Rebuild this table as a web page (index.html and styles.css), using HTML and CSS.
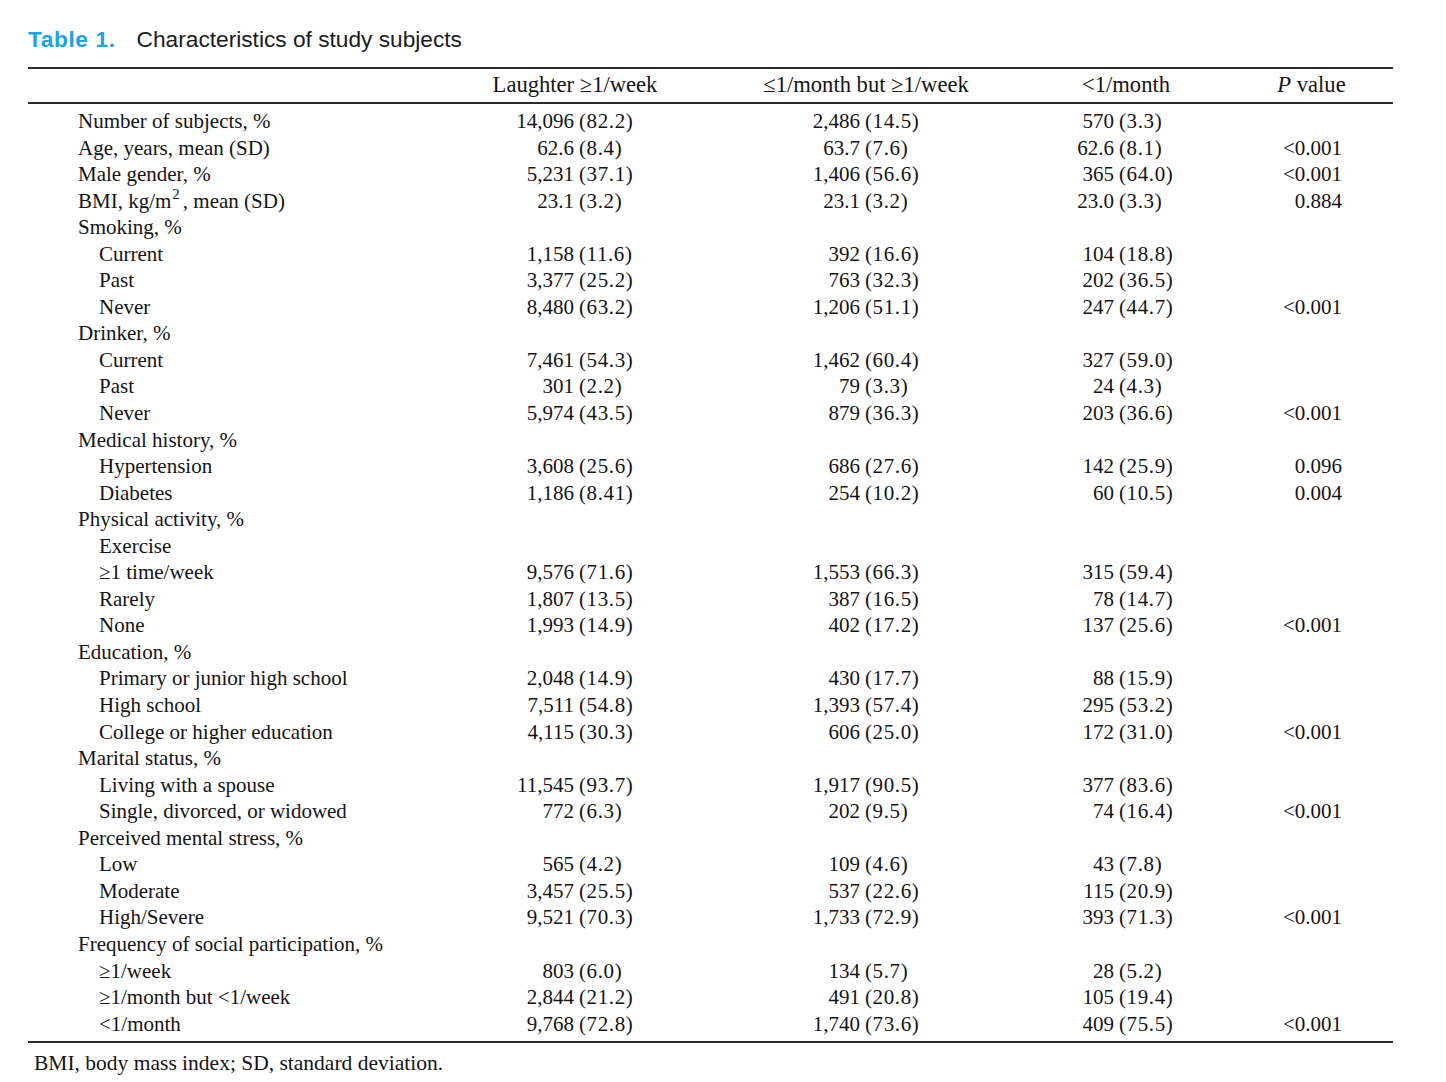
FILE: index.html
```html
<!DOCTYPE html>
<html lang="en">
<head>
<meta charset="utf-8">
<title>Table 1. Characteristics of study subjects</title>
<link rel="stylesheet" href="styles.css">
</head>
<body>
<div class="page">
  <h1 class="title"><span class="tlabel">Table 1.</span><span class="ttext">Characteristics of study subjects</span></h1>
  <div class="table">
    <div class="row head">
      <div class="lab"></div>
      <div class="h">Laughter ≥1/week</div>
      <div class="h">≤1/month but ≥1/week</div>
      <div class="h">&lt;1/month</div>
      <div class="h"><i>P</i> value</div>
    </div>
    <div class="body">
      <div class="row"><div class="lab">Number of subjects, %</div><div class="v c1"><span>14,096</span><span>(82.2)</span></div><div class="v c2"><span>2,486</span><span>(14.5)</span></div><div class="v c3"><span>570</span><span>(3.3)</span></div><div class="p"></div></div>
      <div class="row"><div class="lab">Age, years, mean (SD)</div><div class="v c1"><span>62.6</span><span>(8.4)</span></div><div class="v c2"><span>63.7</span><span>(7.6)</span></div><div class="v c3"><span>62.6</span><span>(8.1)</span></div><div class="p">&lt;0.001</div></div>
      <div class="row"><div class="lab">Male gender, %</div><div class="v c1"><span>5,231</span><span>(37.1)</span></div><div class="v c2"><span>1,406</span><span>(56.6)</span></div><div class="v c3"><span>365</span><span>(64.0)</span></div><div class="p">&lt;0.001</div></div>
      <div class="row"><div class="lab">BMI, kg/m<sup>2</sup>, mean (SD)</div><div class="v c1"><span>23.1</span><span>(3.2)</span></div><div class="v c2"><span>23.1</span><span>(3.2)</span></div><div class="v c3"><span>23.0</span><span>(3.3)</span></div><div class="p">0.884</div></div>
      <div class="row"><div class="lab">Smoking, %</div></div>
      <div class="row"><div class="lab sub">Current</div><div class="v c1"><span>1,158</span><span>(11.6)</span></div><div class="v c2"><span>392</span><span>(16.6)</span></div><div class="v c3"><span>104</span><span>(18.8)</span></div><div class="p"></div></div>
      <div class="row"><div class="lab sub">Past</div><div class="v c1"><span>3,377</span><span>(25.2)</span></div><div class="v c2"><span>763</span><span>(32.3)</span></div><div class="v c3"><span>202</span><span>(36.5)</span></div><div class="p"></div></div>
      <div class="row"><div class="lab sub">Never</div><div class="v c1"><span>8,480</span><span>(63.2)</span></div><div class="v c2"><span>1,206</span><span>(51.1)</span></div><div class="v c3"><span>247</span><span>(44.7)</span></div><div class="p">&lt;0.001</div></div>
      <div class="row"><div class="lab">Drinker, %</div></div>
      <div class="row"><div class="lab sub">Current</div><div class="v c1"><span>7,461</span><span>(54.3)</span></div><div class="v c2"><span>1,462</span><span>(60.4)</span></div><div class="v c3"><span>327</span><span>(59.0)</span></div><div class="p"></div></div>
      <div class="row"><div class="lab sub">Past</div><div class="v c1"><span>301</span><span>(2.2)</span></div><div class="v c2"><span>79</span><span>(3.3)</span></div><div class="v c3"><span>24</span><span>(4.3)</span></div><div class="p"></div></div>
      <div class="row"><div class="lab sub">Never</div><div class="v c1"><span>5,974</span><span>(43.5)</span></div><div class="v c2"><span>879</span><span>(36.3)</span></div><div class="v c3"><span>203</span><span>(36.6)</span></div><div class="p">&lt;0.001</div></div>
      <div class="row"><div class="lab">Medical history, %</div></div>
      <div class="row"><div class="lab sub">Hypertension</div><div class="v c1"><span>3,608</span><span>(25.6)</span></div><div class="v c2"><span>686</span><span>(27.6)</span></div><div class="v c3"><span>142</span><span>(25.9)</span></div><div class="p">0.096</div></div>
      <div class="row"><div class="lab sub">Diabetes</div><div class="v c1"><span>1,186</span><span>(8.41)</span></div><div class="v c2"><span>254</span><span>(10.2)</span></div><div class="v c3"><span>60</span><span>(10.5)</span></div><div class="p">0.004</div></div>
      <div class="row"><div class="lab">Physical activity, %</div></div>
      <div class="row"><div class="lab sub">Exercise</div></div>
      <div class="row"><div class="lab sub">≥1 time/week</div><div class="v c1"><span>9,576</span><span>(71.6)</span></div><div class="v c2"><span>1,553</span><span>(66.3)</span></div><div class="v c3"><span>315</span><span>(59.4)</span></div><div class="p"></div></div>
      <div class="row"><div class="lab sub">Rarely</div><div class="v c1"><span>1,807</span><span>(13.5)</span></div><div class="v c2"><span>387</span><span>(16.5)</span></div><div class="v c3"><span>78</span><span>(14.7)</span></div><div class="p"></div></div>
      <div class="row"><div class="lab sub">None</div><div class="v c1"><span>1,993</span><span>(14.9)</span></div><div class="v c2"><span>402</span><span>(17.2)</span></div><div class="v c3"><span>137</span><span>(25.6)</span></div><div class="p">&lt;0.001</div></div>
      <div class="row"><div class="lab">Education, %</div></div>
      <div class="row"><div class="lab sub">Primary or junior high school</div><div class="v c1"><span>2,048</span><span>(14.9)</span></div><div class="v c2"><span>430</span><span>(17.7)</span></div><div class="v c3"><span>88</span><span>(15.9)</span></div><div class="p"></div></div>
      <div class="row"><div class="lab sub">High school</div><div class="v c1"><span>7,511</span><span>(54.8)</span></div><div class="v c2"><span>1,393</span><span>(57.4)</span></div><div class="v c3"><span>295</span><span>(53.2)</span></div><div class="p"></div></div>
      <div class="row"><div class="lab sub">College or higher education</div><div class="v c1"><span>4,115</span><span>(30.3)</span></div><div class="v c2"><span>606</span><span>(25.0)</span></div><div class="v c3"><span>172</span><span>(31.0)</span></div><div class="p">&lt;0.001</div></div>
      <div class="row"><div class="lab">Marital status, %</div></div>
      <div class="row"><div class="lab sub">Living with a spouse</div><div class="v c1"><span>11,545</span><span>(93.7)</span></div><div class="v c2"><span>1,917</span><span>(90.5)</span></div><div class="v c3"><span>377</span><span>(83.6)</span></div><div class="p"></div></div>
      <div class="row"><div class="lab sub">Single, divorced, or widowed</div><div class="v c1"><span>772</span><span>(6.3)</span></div><div class="v c2"><span>202</span><span>(9.5)</span></div><div class="v c3"><span>74</span><span>(16.4)</span></div><div class="p">&lt;0.001</div></div>
      <div class="row"><div class="lab">Perceived mental stress, %</div></div>
      <div class="row"><div class="lab sub">Low</div><div class="v c1"><span>565</span><span>(4.2)</span></div><div class="v c2"><span>109</span><span>(4.6)</span></div><div class="v c3"><span>43</span><span>(7.8)</span></div><div class="p"></div></div>
      <div class="row"><div class="lab sub">Moderate</div><div class="v c1"><span>3,457</span><span>(25.5)</span></div><div class="v c2"><span>537</span><span>(22.6)</span></div><div class="v c3"><span>115</span><span>(20.9)</span></div><div class="p"></div></div>
      <div class="row"><div class="lab sub">High/Severe</div><div class="v c1"><span>9,521</span><span>(70.3)</span></div><div class="v c2"><span>1,733</span><span>(72.9)</span></div><div class="v c3"><span>393</span><span>(71.3)</span></div><div class="p">&lt;0.001</div></div>
      <div class="row"><div class="lab">Frequency of social participation, %</div></div>
      <div class="row"><div class="lab sub">≥1/week</div><div class="v c1"><span>803</span><span>(6.0)</span></div><div class="v c2"><span>134</span><span>(5.7)</span></div><div class="v c3"><span>28</span><span>(5.2)</span></div><div class="p"></div></div>
      <div class="row"><div class="lab sub">≥1/month but &lt;1/week</div><div class="v c1"><span>2,844</span><span>(21.2)</span></div><div class="v c2"><span>491</span><span>(20.8)</span></div><div class="v c3"><span>105</span><span>(19.4)</span></div><div class="p"></div></div>
      <div class="row"><div class="lab sub">&lt;1/month</div><div class="v c1"><span>9,768</span><span>(72.8)</span></div><div class="v c2"><span>1,740</span><span>(73.6)</span></div><div class="v c3"><span>409</span><span>(75.5)</span></div><div class="p">&lt;0.001</div></div>
    </div>
  </div>
  <p class="foot">BMI, body mass index; SD, standard deviation.</p>
</div>
</body>
</html>
```

FILE: styles.css
```css
html, body {
  margin: 0;
  padding: 0;
  background: #ffffff;
}

.page {
  padding: 26px 0 0 28px;
  width: 1365px;
  color: #141414;
  font-family: "Liberation Serif", "Times New Roman", serif;
  font-size: 21px;
}

.title {
  margin: 0;
  height: 41px;
  font-family: "Liberation Sans", Arial, sans-serif;
  font-weight: normal;
  font-size: 22.7px;
  line-height: 26px;
  color: #1a1a1a;
}

.tlabel {
  color: #1ca3e3;
  font-weight: bold;
  letter-spacing: 0.6px;
  margin-right: 21px;
}

.table {
  border-top: 2px solid #2a2a2a;
  border-bottom: 2px solid #2a2a2a;
}

.row {
  display: grid;
  grid-template-columns: 412px 270px 312px 208px 163px;
  line-height: 26.56px;
  height: 26.56px;
  white-space: nowrap;
}

.head {
  height: 33px;
  line-height: 32px;
  font-size: 22.6px;
  border-bottom: 2px solid #2a2a2a;
}

.h {
  text-align: center;
}

.body {
  padding: 4px 0 4px;
}

.lab {
  padding-left: 50px;
}

.lab.sub {
  padding-left: 71px;
}

.lab sup {
  font-size: 15px;
  line-height: 0;
  vertical-align: 9px;
  margin-left: 1px;
  margin-right: 3px;
}

.v {
  display: grid;
  column-gap: 5px;
}

.v span:first-child {
  text-align: right;
}

.v span:last-child {
  letter-spacing: 0.6px;
}

.c1 { grid-template-columns: 134px 1fr; }
.c2 { grid-template-columns: 150px 1fr; }
.c3 { grid-template-columns: 92px 1fr; }

.p {
  text-align: right;
  padding-right: 51px;
}

.foot {
  margin: 7px 0 0 6px;
  font-size: 21.5px;
  line-height: 26px;
}
```
